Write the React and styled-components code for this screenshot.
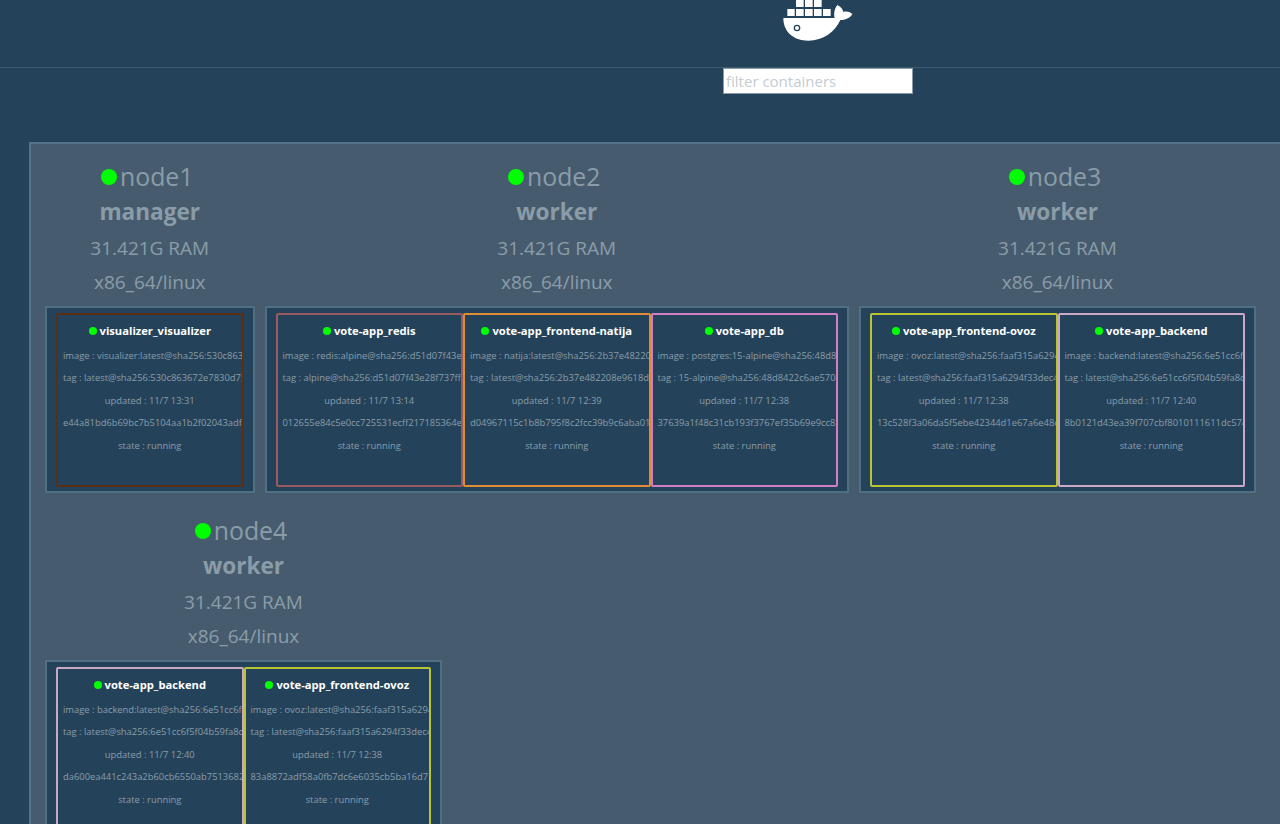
import React from "react";
import styled, { createGlobalStyle } from "styled-components";

const Global = createGlobalStyle`
  html, body { margin: 0; padding: 0; overflow: hidden; height: 824px; background: #24435a; }
  body { font-family: "Open Sans", "Liberation Sans", sans-serif; }
`;

const Page = styled.div`
  width: 1636px;
  height: 824px;
  overflow: hidden;
  background: #24435a;
`;
const Header = styled.header`
  height: 67px;
  border-bottom: 1px solid #3b5a6e;
  display: flex;
  justify-content: center;
  align-items: flex-start;
`;
const FilterRow = styled.div`
  display: flex;
  justify-content: center;
`;
const Filter = styled.input`
  width: 190px;
  height: 26px;
  box-sizing: border-box;
  border: 1px solid #8a9aa8;
  padding: 0 2px;
  background: #fff;
  font: 400 15px "Open Sans", sans-serif;
  outline: none;
  &::placeholder { color: #c4ccd4; opacity: 1; }
`;
const Panel = styled.main`
  margin: 48px 29px 0;
  border: 2px solid #55748a;
  background: #465c6e;
  padding: 15px 14px 40px;
  display: flex;
  flex-wrap: wrap;
  align-items: flex-start;
  column-gap: 10px;
  row-gap: 20px;
  height: 900px;
  box-sizing: border-box;
  align-content: flex-start;
`;
const Node = styled.section`
  display: flex;
  flex-direction: column;
  text-align: center;
  color: #8b9ca9;
`;
const NodeName = styled.div`
  font-size: 24.8px;
  line-height: 35px;
  display: flex;
  justify-content: center;
  align-items: center;
  gap: 3px;
  padding-right: 5px;
`;
const NodeDot = styled.span`
  width: 16px;
  height: 16px;
  border-radius: 50%;
  background: #00ff00;
`;
const Role = styled.div`
  font-size: 22.6px;
  font-weight: 700;
  line-height: 35px;
  margin-bottom: 2px;
`;
const Spec = styled.div`
  font-size: 19px;
  line-height: 34px;
`;
const Box = styled.div`
  margin-top: 7px;
  border: 2px solid #4f6f83;
  background: #24435a;
  padding: 5px 9px 4px;
  display: flex;
`;
const Card = styled.article`
  width: 187.5px;
  height: 174px;
  box-sizing: border-box;
  border: 2px solid ${(p) => p.$color};
  border-radius: 2px;
  padding: 8px 5px 0;
  overflow: hidden;
  text-align: center;
`;
const CardTitle = styled.div`
  color: #fff;
  font-size: 11.2px;
  font-weight: 700;
  line-height: 16px;
  white-space: nowrap;
  display: flex;
  justify-content: center;
  align-items: center;
  gap: 3px;
  margin-bottom: 10.5px;
`;
const CardDot = styled.span`
  width: 8px;
  height: 8px;
  border-radius: 50%;
  background: #00ff00;
`;
const CardLine = styled.div`
  color: #8b9ca9;
  font-size: 9.4px;
  line-height: 12px;
  margin-bottom: 10.5px;
  white-space: nowrap;
`;
const LogoSvg = styled.svg`
  width: 75px;
  height: 43px;
  display: block;
  margin-left: -1px;
`;

const Logo = () => (
  <LogoSvg viewBox="240 0 225 129">
    <g fill="#fff">
      <rect x="262" y="27" width="22" height="21" />
      <rect x="288" y="27" width="23" height="21" />
      <rect x="315" y="27" width="23" height="21" />
      <rect x="342" y="27" width="23" height="21" />
      <rect x="369" y="27" width="23" height="21" />
      <rect x="288" y="0" width="23" height="21" />
      <rect x="315" y="0" width="23" height="21" />
      <rect x="342" y="0" width="23" height="21" />
      <path d="M250 54 H404 C401 42 403 26 412 15 C423 21 429 29 430 36 C439 33 449 35 457 42 C451 55 435 60 421 60 C405 96 370 122 325 122 C280 122 250 95 250 54 Z" />
    </g>
    <circle cx="291" cy="84" r="8" fill="none" stroke="#24435a" strokeWidth="4" />
  </LogoSvg>
);

const C = {
  viz: "#5a2f14", redis: "#9a5b60", natija: "#e08c34", db: "#cf80c4", ovoz: "#b9c431", backend: "#c9a9c6",
};

const nodes = [
  {
    name: "node1", role: "manager",
    cards: [
      { c: C.viz, t: "visualizer_visualizer", image: "visualizer:latest@sha256:530c863672e7830d7560483df66beb4cbbcd375a9f3ec174ff5e", tag: "latest@sha256:530c863672e7830d7560483df66beb4cbbcd375a9f3ec174ff5e", u: "11/7 13:31", id: "e44a81bd6b69bc7b5104aa1b2f02043adf9c5e0c7a12" },
    ],
  },
  {
    name: "node2", role: "worker",
    cards: [
      { c: C.redis, t: "vote-app_redis", image: "redis:alpine@sha256:d51d07f43e28f737ff2a5e1c9b7a3c4d", tag: "alpine@sha256:d51d07f43e28f737ff2a5e1c9b7a3c4d", u: "11/7 13:14", id: "012655e84c5e0cc725531ecff217185364ef0a9d1c7b2" },
      { c: C.natija, t: "vote-app_frontend-natija", image: "natija:latest@sha256:2b37e482208e9618d2a5c1e0f4", tag: "latest@sha256:2b37e482208e9618d2a5c1e0f4a7b6", u: "11/7 12:39", id: "d04967115c1b8b795f8c2fcc39b9c6aba01e77d2c3a4" },
      { c: C.db, t: "vote-app_db", image: "postgres:15-alpine@sha256:48d8422c6ae570a1b", tag: "15-alpine@sha256:48d8422c6ae570a1b3c4d5e6", u: "11/7 12:38", id: "37639a1f48c31cb193f3767ef35b69e9cc8a1f0b44c1" },
    ],
  },
  {
    name: "node3", role: "worker",
    cards: [
      { c: C.ovoz, t: "vote-app_frontend-ovoz", image: "ovoz:latest@sha256:faaf315a6294f33dec4a1b7c9d", tag: "latest@sha256:faaf315a6294f33dec4a1b2c3d", u: "11/7 12:38", id: "13c528f3a06da5f5ebe42344d1e67a6e48d0c1f2a8b3" },
      { c: C.backend, t: "vote-app_backend", image: "backend:latest@sha256:6e51cc6f5f04b59fa8d", tag: "latest@sha256:6e51cc6f5f04b59fa8d1e2f3a4", u: "11/7 12:40", id: "8b0121d43ea39f707cbf8010111611dc574a2b3c9d0e" },
    ],
  },
  {
    name: "node4", role: "worker",
    cards: [
      { c: C.backend, t: "vote-app_backend", image: "backend:latest@sha256:6e51cc6f5f04b59fa8d", tag: "latest@sha256:6e51cc6f5f04b59fa8d1e2f3a4", u: "11/7 12:40", id: "da600ea441c243a2b60cb6550ab75136821f0e9d4c2a" },
      { c: C.ovoz, t: "vote-app_frontend-ovoz", image: "ovoz:latest@sha256:faaf315a6294f33dec4a1b7c9d", tag: "latest@sha256:faaf315a6294f33dec4a1b2c3d", u: "11/7 12:38", id: "83a8872adf58a0fb7dc6e6035cb5ba16d71e2c3f5a9b" },
    ],
  },
];

export default function App() {
  return (
    <Page>
      <Global />
      <Header><Logo /></Header>
      <FilterRow><Filter placeholder="filter containers" /></FilterRow>
      <Panel>
        {nodes.map((n) => (
          <Node key={n.name}>
            <NodeName><NodeDot />{n.name}</NodeName>
            <Role>{n.role}</Role>
            <Spec>31.421G RAM</Spec>
            <Spec>x86_64/linux</Spec>
            <Box>
              {n.cards.map((k) => (
                <Card key={k.t} $color={k.c}>
                  <CardTitle><CardDot />{k.t}</CardTitle>
                  <CardLine>image : {k.image}</CardLine>
                  <CardLine>tag : {k.tag}</CardLine>
                  <CardLine>updated : {k.u}</CardLine>
                  <CardLine>{k.id}</CardLine>
                  <CardLine>state : running</CardLine>
                </Card>
              ))}
            </Box>
          </Node>
        ))}
      </Panel>
    </Page>
  );
}
